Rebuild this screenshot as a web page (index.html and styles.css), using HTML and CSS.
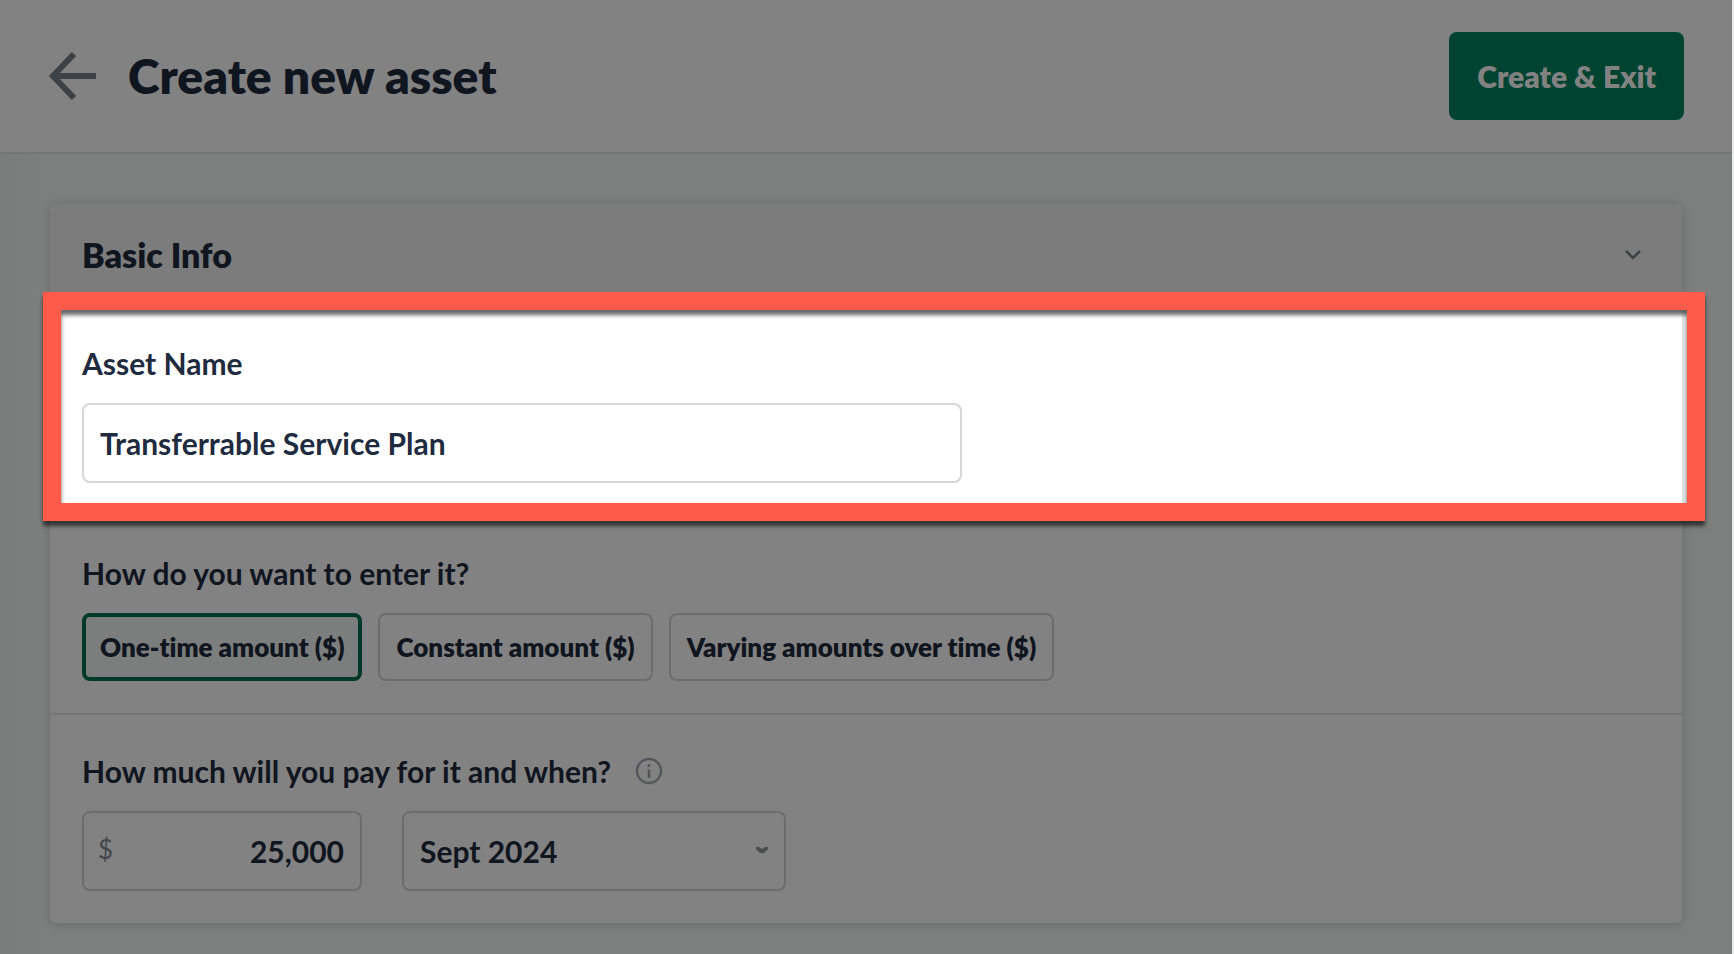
FILE: index.html
```html
<!DOCTYPE html>
<html lang="en">
<head>
<meta charset="utf-8">
<meta name="viewport" content="width=device-width, initial-scale=1">
<title>Create new asset</title>
<link rel="stylesheet" href="styles.css">
</head>
<body>
<div class="shell">
  <header class="topbar">
    <button class="back" type="button" aria-label="Back">
      <svg width="48" height="48" viewBox="0 0 48 48" fill="none" stroke="currentColor" stroke-width="6"><path d="M48 24H6M26 2L5 24l21 22"/></svg>
    </button>
    <h1 class="title">Create new asset</h1>
    <button class="primary" type="submit" form="asset-form">Create &amp; Exit</button>
  </header>
  <main class="content">
    <form class="card" id="asset-form">
      <header class="card-header">
        <h2 class="card-title">Basic Info</h2>
        <button class="collapse" type="button" aria-label="Collapse Basic Info">
          <svg width="18" height="12" viewBox="0 0 18 12" fill="none" stroke="currentColor" stroke-width="2.6"><path d="M2 2l7 7 7-7"/></svg>
        </button>
      </header>
      <section class="section section-spotlit">
        <label class="label" for="asset-name">Asset Name</label>
        <input class="control name-input" id="asset-name" type="text" value="Transferrable Service Plan">
        <div class="spotlight"></div>
      </section>
      <section class="section">
        <h3 class="label">How do you want to enter it?</h3>
        <div class="options">
          <button class="option option-selected" type="button" aria-pressed="true">One-time amount ($)</button>
          <button class="option" type="button" aria-pressed="false">Constant amount ($)</button>
          <button class="option" type="button" aria-pressed="false">Varying amounts over time ($)</button>
        </div>
      </section>
      <section class="section">
        <div class="label-row">
          <label class="label" for="amount">How much will you pay for it and when?</label>
          <svg class="info" width="28" height="28" viewBox="0 0 28 28" fill="none" stroke="currentColor"><circle cx="14" cy="14" r="12" stroke-width="2.4"/><path d="M14 12.5V21M14 7v3" stroke-width="2.6"/></svg>
        </div>
        <div class="fields">
          <div class="money">
            <span class="currency">$</span>
            <input class="control amount-input" id="amount" type="text" inputmode="numeric" value="25,000">
          </div>
          <div class="picker">
            <select class="control date-select" aria-label="Payment date"><option>Sept 2024</option></select>
            <svg class="caret" width="12" height="6" viewBox="0 0 12 6" fill="currentColor"><path d="M0 0h3l3 2 3-2h3v2L8 6H4L0 2z"/></svg>
          </div>
        </div>
      </section>
    </form>
  </main>
</div>
</body>
</html>
```
FILE: styles.css
```css
* { box-sizing: border-box; }

body {
  margin: 0;
  color: #1f2b3f;
  font-family: Lato, "Open Sans", sans-serif;
  font-size: 30px;
  font-variant-ligatures: none;
  line-height: 40px;
}

h1, h2, h3 { margin: 0; }

button, input, select {
  margin: 0;
  color: inherit;
  font: inherit;
  font-variant-ligatures: none;
}

button { cursor: pointer; }
svg { display: block; }

.shell {
  display: flex;
  flex-direction: column;
  min-height: 100vh;
  overflow: hidden;
  border-right: 2px solid #ececec;
  background: #fff;
}

.topbar {
  display: flex;
  align-items: center;
  gap: 32px;
  padding: 32px 48px;
  border-bottom: 2px solid #e6e6e6;
}

.back, .collapse {
  padding: 0;
  border: 0;
  background: none;
  color: #7a808b;
}

.title {
  flex: 1;
  font-size: 48px;
  font-weight: 800;
  line-height: 56px;
}

.primary {
  padding: 24px 28px;
  border: 0;
  border-radius: 8px;
  background: #008461;
  color: #fff;
  font-weight: 800;
}

.content {
  flex: 1;
  padding: 50px 50px 30px;
  background: linear-gradient(90deg, #f0f3f1, #f5f9f7 40px);
}

.card {
  border-radius: 6px;
  background: #fff;
  box-shadow: 0 1px 8px 1px rgba(0, 0, 0, 0.14);
}

.card-header {
  display: flex;
  align-items: center;
  justify-content: space-between;
  padding: 31px 40px 32px 32px;
  border-radius: 6px 6px 0 0;
  background: #f4f4f4;
}

.card-title {
  font-size: 34px;
  font-weight: 800;
}

.section { padding: 36px 32px 32px; }
.section + .section { border-top: 2px solid #e6e6e6; }
.section-spotlit { position: relative; }

.label {
  display: block;
  margin-bottom: 20px;
  font-size: 30px;
  font-weight: 700;
}

.label-row {
  display: flex;
  gap: 24px;
}

.info {
  margin-top: 6px;
  color: #a5a8b0;
}

.control {
  display: block;
  width: 100%;
  height: 80px;
  padding: 0 16px;
  border: 2px solid #d5d5da;
  border-radius: 8px;
  background: #fff;
  font-weight: 700;
}

.name-input { max-width: 880px; }

.options {
  display: flex;
  flex-wrap: wrap;
  gap: 16px;
}

.option {
  padding: 14px 16px;
  border: 2px solid #d5d5da;
  border-radius: 8px;
  background: #fff;
  font-size: 26px;
  font-weight: 800;
  line-height: 36px;
}

.option-selected {
  padding: 12px 14px;
  border: 4px solid #007052;
  background: #f3f7f5;
}

.fields {
  display: flex;
  gap: 40px;
}

.money, .picker { position: relative; }
.money { width: 280px; }
.picker { width: 384px; }
.amount-input { text-align: right; }
.date-select { appearance: none; }

.currency {
  position: absolute;
  top: 18px;
  left: 16px;
  color: #858b95;
  font-size: 26px;
}

.caret {
  position: absolute;
  top: 36px;
  right: 18px;
  color: #8d9995;
}

/* Tour frame: dims the rest of the page around the asset name field. */
.spotlight {
  position: absolute;
  inset: -15px -23px -6px -7px;
  z-index: 1;
  border: 18px solid #ff5a4a;
  box-shadow:
    inset 0 5px 4px rgba(0, 0, 0, 0.6),
    0 5px 4px rgba(0, 0, 0, 0.6),
    0 0 0 200vmax rgba(0, 0, 0, 0.49);
  pointer-events: none;
}
```
